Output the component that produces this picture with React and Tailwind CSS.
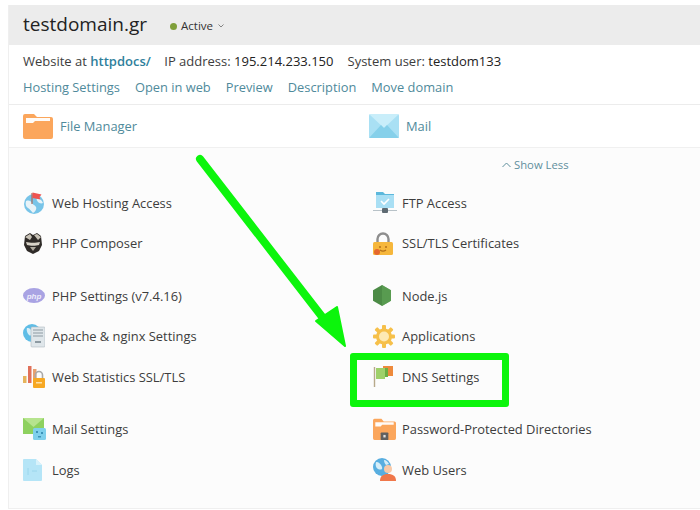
const Folder = ({ lock, w = 30, h = 26 }) => (
  <svg width={w} height={h} viewBox="0 0 30 26" preserveAspectRatio="none">
    <path d="M0 3a2 2 0 0 1 2-2h9l3 3h14a2 2 0 0 1 2 2v18a2 2 0 0 1-2 2H2a2 2 0 0 1-2-2z" fill="#fba65c" />
    <path d="M3 5h24v3H12l-2 2H3z" fill="#fff" opacity="0.95" />
    {lock && <g><rect x="10" y="17" width="10" height="9" rx="1" fill="#5f5f5f" /><rect x="13.5" y="20" width="3" height="3" fill="#ddd" /></g>}
  </svg>
);

const MailIcon = () => (
  <svg width="30" height="24" viewBox="0 0 30 24">
    <rect width="30" height="24" rx="1.5" fill="#a9e0f4" />
    <path d="M0 0l15 14L30 0z" fill="#c9eefa" />
    <path d="M0 24l12-13 3 3 3-3 12 13z" fill="#86d0ea" />
  </svg>
);

const Globe = () => (
  <svg width="22" height="22" viewBox="0 0 22 22">
    <circle cx="11" cy="12" r="10" fill="#78c4e8" />
    <path d="M3 9c3-1 5 0 6 2s3 2 4 4-1 5-3 6c-2-2-3-4-5-5S2 12 3 9z" fill="#e8f3f8" />
    <path d="M14 6c2 0 5 2 6 5-2 1-4 0-5-1s-2-3-1-4z" fill="#e8f3f8" />
    <path d="M9 1v11" stroke="#a86a5a" strokeWidth="1.2" />
    <path d="M9.500 0.500l9 2-2 2.500 1 2.500-8-1.500z" fill="#ef5350" />
  </svg>
);

const Composer = () => (
  <svg width="20" height="22" viewBox="0 0 20 22">
    <path d="M2 4l5-3 3 2 4-2 4 3 1 9-3 6-6 3-6-3-3-6z" fill="#2f2b28" />
    <path d="M2 5l5-3 2 3-2 3zM11 3l3-1 4 3-3 3z" fill="#c9c3b7" />
    <path d="M3 10c4 1 10 1 14 0l-1 3c-3 1-9 1-12 0z" fill="#d8d3c8" />
    <path d="M7 15h6l-3 4z" fill="#b0aba0" />
  </svg>
);

const Php = () => (
  <svg width="22" height="15" viewBox="0 0 22 15">
    <ellipse cx="11" cy="7.500" rx="11" ry="7.500" fill="#a9a3e3" />
    <text x="11" y="10.500" textAnchor="middle" fontSize="8" fontStyle="italic" fontWeight="700" fontFamily="Liberation Sans, sans-serif" fill="#eeedfb">php</text>
  </svg>
);

const Apache = () => (
  <svg width="22" height="24" viewBox="0 0 22 24">
    <circle cx="9" cy="9" r="9" fill="#5fbde6" />
    <path d="M4 4c3 0 5 2 5 5s-2 3-3 2-3-4-2-7z" fill="#d9eff8" />
    <rect x="8" y="3" width="14" height="20" rx="1" fill="#dfe6ea" stroke="#aeb9bf" strokeWidth="0.6" />
    <path d="M10 6h10M10 9h10M10 12h10" stroke="#8d9aa2" strokeWidth="1" />
    <rect x="12" y="17" width="6" height="2" fill="#8d9aa2" />
  </svg>
);

const Stats = () => (
  <svg width="22" height="22" viewBox="0 0 22 22">
    <rect x="0" y="10" width="3.500" height="7" fill="#e6b45c" />
    <rect x="5" y="0" width="3.500" height="17" fill="#e0705a" />
    <rect x="10" y="3" width="3.500" height="14" fill="#e8a070" />
    <path d="M12.500 12V9a3.500 3.500 0 0 1 7 0v3" fill="none" stroke="#a8a8a8" strokeWidth="1.6" />
    <rect x="10" y="12" width="12" height="10" rx="1" fill="#f7a823" />
    <rect x="13" y="16" width="6" height="1.500" fill="#fde0a8" />
  </svg>
);

const MailSettings = () => (
  <svg width="23" height="22" viewBox="0 0 23 22">
    <rect width="21" height="16" y="0" fill="#8ed15f" />
    <path d="M0 0l10.500 9L21 0z" fill="#b6e48e" />
    <rect x="10" y="10" width="13" height="12" rx="1.500" fill="#7fd0ec" />
    <path d="M13 13h2v2h-2zM18 14h2v2h-2zM15 18h3v1.500h-3z" fill="#3d93b8" />
  </svg>
);

const Logs = () => (
  <svg width="20" height="23" viewBox="0 0 20 23">
    <path d="M1 1h12l6 6v15a1 1 0 0 1-1 1H1a1 1 0 0 1-1-1V2a1 1 0 0 1 1-1z" fill="#b5e5f7" />
    <path d="M13 1l6 6h-6z" fill="#d8f2fb" />
    <path d="M5 10v7M9 13h5" stroke="#9ad6ec" strokeWidth="1" />
  </svg>
);

const Ftp = () => (
  <svg width="24" height="23" viewBox="0 0 24 23">
    <path d="M3 1h7l2 2h9v14H3z" fill="#5cb8dc" />
    <rect x="3" y="4" width="18" height="13" fill="#a9dff4" />
    <path d="M8 10l3 3 5-5" fill="none" stroke="#fff" strokeWidth="1.600" />
    <path d="M0 19.500h24" stroke="#b8c2c8" strokeWidth="1" />
    <rect x="9" y="17" width="6" height="5" rx="1" fill="#5e6a72" />
  </svg>
);

const Ssl = () => (
  <svg width="20" height="23" viewBox="0 0 20 23">
    <path d="M4.500 11V7a5.500 5.500 0 0 1 11 0v4" fill="none" stroke="#8e8e8e" strokeWidth="2.400" />
    <rect x="0" y="10" width="20" height="13" rx="1.500" fill="#f6b73c" />
    <circle cx="4" cy="20" r="3" fill="#e5672e" />
    <path d="M6 15h2M12 15h2M7 18c2 1.500 4 1.500 6 0" stroke="#b5701a" strokeWidth="1.300" fill="none" />
  </svg>
);

const Node = () => (
  <svg width="18" height="21" viewBox="0 0 18 21">
    <path d="M9 0l9 5.250v10.500L9 21l-9-5.250V5.250z" fill="#4c8b46" />
    <path d="M9 0l9 5.250v10.500L9 21z" fill="#5ea354" opacity="0.7" />
  </svg>
);

const Gear = () => (
  <svg width="22" height="23" viewBox="0 0 22 23">
    <g fill="#f6c04a">
      <circle cx="11" cy="11.500" r="8" />
      <rect x="9" y="0" width="4" height="23" rx="1" />
      <rect x="0" y="9.500" width="22" height="4" rx="1" />
      <rect x="9" y="0" width="4" height="23" rx="1" transform="rotate(45 11 11.500)" />
      <rect x="9" y="0" width="4" height="23" rx="1" transform="rotate(-45 11 11.500)" />
    </g>
    <circle cx="11" cy="11.500" r="5" fill="#fde9b4" />
  </svg>
);

const Flags = () => (
  <svg width="20" height="21" viewBox="0 0 20 21">
    <path d="M1.500 1v20" stroke="#b7a98a" strokeWidth="1.400" />
    <path d="M3 2h9v11H3z" fill="#9fd06a" />
    <path d="M10 0h10v10h-8V2h-2z" fill="#ee8a3c" />
    <path d="M12 2h3v9h-3z" fill="#6cae42" />
  </svg>
);

const WebUsers = () => (
  <svg width="23" height="23" viewBox="0 0 23 23">
    <circle cx="9" cy="9" r="9" fill="#58aee0" />
    <path d="M3 4c3 0 5 2 6 5s-2 3-4 2-3-4-2-7zM11 2c2 0 4 2 5 4l-3 1c-1-1-2-3-2-5z" fill="#d6eef8" />
    <circle cx="15" cy="11" r="4" fill="#f8c9a8" />
    <path d="M7 23c0-5 3-7 8-7s8 2 8 7z" fill="#f0774a" />
  </svg>
);

const Item = ({ icon, label }) => (
  <div className="flex items-center h-[40.500px]">
    <div className="w-[29px] flex justify-start shrink-0">{icon}</div>
    <span>{label}</span>
  </div>
);

const Group = ({ items }) => (
  <div className="grid grid-cols-[350px_1fr] mb-3">
    {items.map((it) => (
      <Item key={it.label} icon={it.icon} label={it.label} />
    ))}
  </div>
);

export default function App() {
  return (
    <div
      className="relative w-[700px] h-[510px] overflow-hidden bg-white pt-[5px] pl-2 text-[12.9px] leading-5 text-[#3d3d3d]"
      style={{ fontFamily: '"Open Sans", "Liberation Sans", sans-serif' }}
    >
      <div className="w-[692px] h-[504px] bg-[#fcfcfc] border-l border-b border-[#efefef]">
        <div className="h-10 bg-[#ececec] flex items-center pl-[14px] pt-[2px]">
          <span className="text-[19px] font-medium text-[#222] w-[146px] pb-[4px]">testdomain.gr</span>
          <span className="w-[7px] h-[7px] rounded-full bg-[#7f9f3a] mr-[4px] ml-[1px]" />
          <span className="text-[11.500px] font-medium text-[#333]">Active</span>
          <svg className="ml-[5px]" width="6" height="4" viewBox="0 0 6 4">
            <path d="M0.500 0.500L3 3l2.500-2.500" fill="none" stroke="#777" strokeWidth="0.900" />
          </svg>
        </div>
        <div className="bg-white pl-[14px] h-[60px] pt-[6px] border-b border-[#ececec]">
          <div className="flex h-5 whitespace-pre text-[13px]">
            <span>Website at </span>
            <span className="font-semibold text-[#2f7f9c] w-[59px]">httpdocs/</span>
            <span className="ml-[15px]">IP address: </span>
            <span className="font-medium text-[#222]">195.214.233.150</span>
            <span className="ml-[14px]">System user: </span>
            <span className="font-medium text-[#222]">testdom133</span>
          </div>
          <div className="flex gap-[15px] mt-[6px] text-[#4f8a9b] text-[12.850px]">
            <span>Hosting Settings</span>
            <span>Open in web</span>
            <span>Preview</span>
            <span>Description</span>
            <span>Move domain</span>
          </div>
        </div>
        <div className="bg-white h-[43px] pl-[14px] grid grid-cols-[346px_1fr] items-center border-b border-[#f0f0f0] text-[#4f8a9b]">
          <div className="flex items-center">
            <div className="w-[37px]"><Folder /></div>
            <span>File Manager</span>
          </div>
          <div className="flex items-center">
            <div className="w-[37px]"><MailIcon /></div>
            <span>Mail</span>
          </div>
        </div>
        <div className="h-[34px] flex items-center pl-[493px] text-[11.300px] text-[#5f8f9c]">
          <svg className="mr-[3px]" width="9" height="6" viewBox="0 0 9 6">
            <path d="M0.500 5L4.500 1l4 4" fill="none" stroke="#5f8f9c" strokeWidth="1" />
          </svg>
          <span>Show Less</span>
        </div>
        <div className="pl-[14px] pt-[0.500px]">
          <Group
            items={[
              { icon: <Globe />, label: "Web Hosting Access" },
              { icon: <Ftp />, label: "FTP Access" },
              { icon: <Composer />, label: "PHP Composer" },
              { icon: <Ssl />, label: "SSL/TLS Certificates" },
            ]}
          />
          <Group
            items={[
              { icon: <Php />, label: "PHP Settings (v7.4.16)" },
              { icon: <Node />, label: "Node.js" },
              { icon: <Apache />, label: "Apache & nginx Settings" },
              { icon: <Gear />, label: "Applications" },
              { icon: <Stats />, label: "Web Statistics SSL/TLS" },
              { icon: <Flags />, label: "DNS Settings" },
            ]}
          />
          <Group
            items={[
              { icon: <MailSettings />, label: "Mail Settings" },
              { icon: <Folder lock w={23} h={22} />, label: "Password-Protected Directories" },
              { icon: <Logs />, label: "Logs" },
              { icon: <WebUsers />, label: "Web Users" },
            ]}
          />
        </div>
      </div>
      <svg className="absolute left-0 top-0 pointer-events-none" width="700" height="510" viewBox="0 0 700 510">
        <path d="M200 159L330 327" stroke="#0cf50c" strokeWidth="8" strokeLinecap="round" fill="none" />
        <path d="M316 321L345 346L337 307z" fill="#0cf50c" stroke="#0cf50c" strokeWidth="2" strokeLinejoin="round" />
      </svg>
      <div className="absolute left-[350px] top-[353px] w-[159px] h-[54px] border-[7px] border-[#0cf50c] rounded-[3px]" />
    </div>
  );
}
